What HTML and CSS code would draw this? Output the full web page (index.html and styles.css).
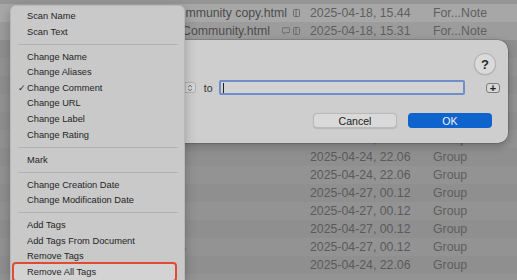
FILE: index.html
```html
<!DOCTYPE html>
<html>
<head>
<meta charset="utf-8">
<link rel="stylesheet" href="styles.css">
</head>
<body>
<div class="list">
  <div class="row r-top0"><div class="name"></div></div>
  <div class="row r-a">
    <div class="name"><span class="txt">Forum Community copy.html</span><span class="icons"><svg class="doc" width="7" height="8" viewBox="0 0 7 8"><rect x="0.5" y="0.5" width="6" height="7" rx="1" fill="none" stroke="#6a6a6a"/><line x1="3" y1="1" x2="3" y2="7" stroke="#6a6a6a"/></svg></span></div>
    <div class="date">2025-04-18, 15.44</div><div class="kind">For...Note</div>
  </div>
  <div class="row r-b">
    <div class="name"><span class="txt txt-b">Forum - Community.html</span><span class="icons"><svg class="cmt" width="8" height="8" viewBox="0 0 8 8"><path d="M1 0.8h6a0.6 0.6 0 0 1 .6.6v3.6a0.6 0.6 0 0 1-.6.6H3.6L2 7.2V5.6H1a0.6 0.6 0 0 1-.6-.6V1.4a0.6 0.6 0 0 1 .6-.6z" fill="none" stroke="#6a6a6a" stroke-width="0.9"/></svg><svg class="doc" width="7" height="8" viewBox="0 0 7 8"><rect x="0.5" y="0.5" width="6" height="7" rx="1" fill="none" stroke="#6a6a6a"/><line x1="3" y1="1" x2="3" y2="7" stroke="#6a6a6a"/></svg></span></div>
    <div class="date">2025-04-18, 15.31</div><div class="kind">For...Note</div>
  </div>
  <div class="row dim"></div>
  <div class="row dim alt"></div>
  <div class="row dim"></div>
  <div class="row dim alt"></div>
  <div class="row dim"></div>
  <div class="row dim alt"><div class="name"></div><div class="date">2025-04-24, 22.06</div><div class="kind">Group</div></div>
  <div class="row dim"><div class="name"></div><div class="date">2025-04-24, 22.06</div><div class="kind">Group</div></div>
  <div class="row dim alt"><div class="name"></div><div class="date">2025-04-24, 22.06</div><div class="kind">Group</div></div>
  <div class="row dim"><div class="name"></div><div class="date">2025-04-27, 00.12</div><div class="kind">Group</div></div>
  <div class="row dim alt"><div class="name"></div><div class="date">2025-04-27, 00.12</div><div class="kind">Group</div></div>
  <div class="row dim"><div class="name"></div><div class="date">2025-04-27, 00.12</div><div class="kind">Group</div></div>
  <div class="row dim alt"><div class="name"><span class="txt txt-s">Templates</span></div><div class="date">2025-04-27, 00.12</div><div class="kind">Group</div></div>
  <div class="row dim"><div class="name"></div><div class="date">2025-04-24, 22.06</div><div class="kind">Group</div></div>
  <div class="row dim alt last"></div>
</div>

<div class="sheet">
  <div class="help-row"><div class="help">?</div></div>
  <div class="field-row">
    <div class="popup"><span class="stepper"><svg width="6" height="8" viewBox="0 0 6 8"><path d="M1.2 3 3 1.3 4.8 3M1.2 5 3 6.7 4.8 5" fill="none" stroke="#555" stroke-width="0.9"/></svg></span></div>
    <span class="to">to</span>
    <div class="field"><span class="caret"></span></div>
    <div class="plus">+</div>
  </div>
  <div class="btn-row">
    <div class="btn cancel">Cancel</div>
    <div class="btn ok">OK</div>
  </div>
</div>

<div class="menu">
  <div class="item">Scan Name</div>
  <div class="item">Scan Text</div>
  <div class="sep"></div>
  <div class="item">Change Name</div>
  <div class="item">Change Aliases</div>
  <div class="item"><span class="check">✓</span>Change Comment</div>
  <div class="item">Change URL</div>
  <div class="item">Change Label</div>
  <div class="item">Change Rating</div>
  <div class="sep"></div>
  <div class="item">Mark</div>
  <div class="sep"></div>
  <div class="item">Change Creation Date</div>
  <div class="item">Change Modification Date</div>
  <div class="sep"></div>
  <div class="item">Add Tags</div>
  <div class="item">Add Tags From Document</div>
  <div class="item">Remove Tags</div>
  <div class="item marked">Remove All Tags</div>
</div>
</body>
</html>
```

FILE: styles.css
```css
html, body {
  margin: 0;
  padding: 0;
}
body {
  width: 517px;
  height: 280px;
  overflow: hidden;
  position: relative;
  background: #8d8d8d;
  font-family: "Liberation Sans", Arial, sans-serif;
}

/* background file list */
.list {
  display: flex;
  flex-direction: column;
  height: 280px;
  overflow: hidden;
}
.row {
  height: 18px;
  flex: none;
  display: flex;
  align-items: center;
  font-size: 12.3px;
  color: #4c4c4c;
  white-space: nowrap;
}
.row.last { height: 6px; }
.r-top0 {
  height: 4px;
  background: #959595;
}
.r-a { background: #a7a7a7; }
.r-b { background: #9c9c9c; }
.dim { background: #8f8f8f; color: #5e5e5e; }
.dim.alt { background: #939393; }

.name {
  width: 300px;
  flex: none;
  display: flex;
  justify-content: flex-end;
  align-items: center;
  overflow: hidden;
}
.txt { flex: none; }
.icons {
  display: flex;
  align-items: center;
  gap: 3px;
  margin-left: 6px;
}
.txt-b + .icons { margin-left: 12px; }
.txt-s { margin-right: 114px; }
.date {
  margin-left: 10px;
  width: 123px;
  flex: none;
  color: #5a5a5a;
}
.r-a .date, .r-b .date, .r-a .kind, .r-b .kind { color: #5f5f5f; }
.kind { color: #5e5e5e; }

/* dialog sheet */
.sheet {
  position: absolute;
  left: 120px;
  top: 40px;
  width: 388px;
  height: 103px;
  box-sizing: border-box;
  background: #cecece;
  border-radius: 10px;
  box-shadow: 0 3px 10px rgba(0,0,0,0.28), 0 0 0 0.5px rgba(0,0,0,0.25);
  padding: 13px 12px 0 0;
  display: flex;
  flex-direction: column;
}
.help-row {
  display: flex;
  justify-content: flex-end;
  height: 22px;
}
.help {
  width: 20px;
  height: 20px;
  border-radius: 50%;
  background: #dadada;
  border: 1px solid #b3b3b3;
  box-shadow: 0 0.5px 1px rgba(0,0,0,0.15);
  display: flex;
  align-items: center;
  justify-content: center;
  font-size: 13px;
  font-weight: bold;
  color: #2a2a2a;
}
.field-row {
  margin-top: 5px;
  height: 15px;
  display: flex;
  align-items: center;
  margin-right: -4px;
}
.popup {
  margin-left: 20px;
  width: 56px;
  height: 11px;
  box-sizing: border-box;
  background: #d6d6d6;
  border: 1px solid #b0b0b0;
  border-radius: 3px;
  display: flex;
  justify-content: flex-end;
}
.stepper {
  width: 9px;
  height: 9px;
  display: flex;
  align-items: center;
  justify-content: center;
  border-left: 1px solid #bdbdbd;
}
.to {
  margin-left: 8px;
  font-size: 10.5px;
  color: #333;
}
.field {
  margin-left: 6px;
  width: 247px;
  height: 15px;
  box-sizing: border-box;
  border: 2px solid #6f8fcb;
  border-radius: 2px;
  background: #d3d3d3;
  display: flex;
  align-items: center;
  padding-left: 2px;
}
.caret {
  width: 1px;
  height: 10px;
  background: #222;
}
.plus {
  margin-left: 21px;
  width: 14px;
  height: 10px;
  box-sizing: border-box;
  border: 1px solid #7c7c7c;
  border-radius: 3px;
  background: #d8d8d8;
  font-size: 11px;
  line-height: 8px;
  text-align: center;
  color: #222;
  font-weight: bold;
}
.btn-row {
  margin-top: 18px;
  display: flex;
  justify-content: flex-end;
  gap: 11px;
  padding-right: 4px;
}
.btn {
  width: 84px;
  height: 15px;
  box-sizing: border-box;
  border-radius: 4px;
  font-size: 10.6px;
  display: flex;
  align-items: center;
  justify-content: center;
}
.cancel {
  background: #d9d9d9;
  border: 1px solid #b9b9b9;
  color: #222;
  box-shadow: 0 0.5px 1px rgba(0,0,0,0.12);
}
.ok {
  background: #0e63cc;
  color: #f2f2f2;
}

/* context menu */
.menu {
  position: absolute;
  left: 10px;
  top: 5px;
  width: 175px;
  height: 275px;
  box-sizing: border-box;
  background: #c9c9c9;
  border: 1px solid #b8b8b8;
  border-bottom: none;
  border-radius: 6px 6px 0 0;
  box-shadow: 0 4px 12px rgba(0,0,0,0.25);
  padding-top: 2.2px;
  display: flex;
  flex-direction: column;
  overflow: hidden;
  font-size: 9.3px;
  color: #1f1f1f;
}
.item {
  height: 15.6px;
  flex: none;
  display: flex;
  align-items: center;
  padding-left: 16px;
  position: relative;
  white-space: nowrap;
}
.check {
  position: absolute;
  left: 7px;
  font-size: 9px;
}
.sep {
  height: 9.4px;
  flex: none;
  display: flex;
  align-items: center;
}
.sep::before {
  content: "";
  display: block;
  height: 1px;
  width: 160px;
  margin-left: 7px;
  background: #b2b2b2;
}
.item.marked {
  height: 14.6px;
  margin: -2px 7px 0 1px;
  padding-left: 13px;
  padding-top: 1px;
  border: 2px solid #e24a32;
  border-radius: 4px;
  background: #d3d3d3;
}
```
